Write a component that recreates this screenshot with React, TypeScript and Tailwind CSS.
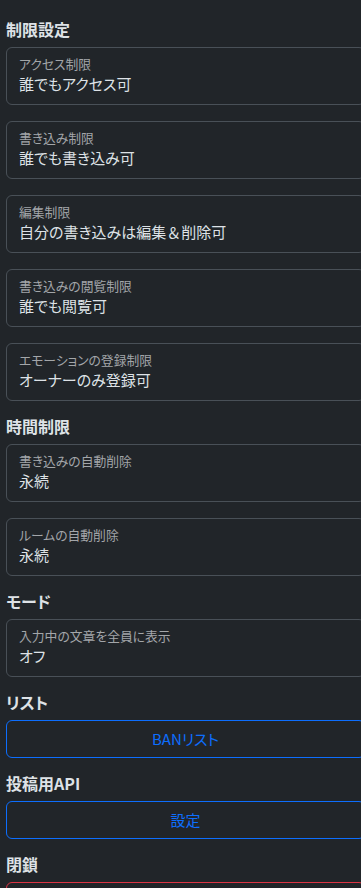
import React from "react";

const font = { fontFamily: '"Noto Sans CJK JP", "Noto Sans", sans-serif' };

function Heading({ children }: { children: React.ReactNode }) {
  return (
    <div className="mb-2 text-[16px] leading-[19px] font-bold text-[#dee2e6]">{children}</div>
  );
}

function Field({ label, value }: { label: string; value: React.ReactNode }) {
  return (
    <div className="mb-4 w-[359px] rounded-[6px] border border-[#495057] px-3 pt-[7px] pb-[8px]">
      <div className="text-[12.8px] leading-[17px] text-[#a3a6a9]">{label}</div>
      <div className="text-[15px] leading-[24px] text-[#dee2e6]">{value}</div>
    </div>
  );
}

function Btn({ children, red }: { children?: React.ReactNode; red?: boolean }) {
  return (
    <button
      className={
        red
          ? "mb-4 block h-[38px] w-[359px] rounded-[6px] border border-[#dc3545] text-center text-[15px] leading-[24px] text-[#dc3545]"
          : "mb-4 block h-[38px] w-[359px] rounded-[6px] border border-[#0d6efd] text-center text-[15px] leading-[24px] text-[#0d6efd]"
      }
    >
      {children}
    </button>
  );
}

export default function App() {
  return (
    <div
      className="h-[888px] w-full overflow-hidden bg-[#212529] [font-feature-settings:'palt']"
      style={font}
    >
      <div className="pl-[6px] pt-[20px]">
        <Heading>制限設定</Heading>
        <Field label="アクセス制限" value="誰でもアクセス可" />
        <Field label="書き込み制限" value="誰でも書き込み可" />
        <Field
          label="編集制限"
          value={
            <>
              自分の書き込みは編集
              <span className="[font-feature-settings:normal]">＆</span>
              削除可
            </>
          }
        />
        <Field label="書き込みの閲覧制限" value="誰でも閲覧可" />
        <Field label="エモーションの登録制限" value="オーナーのみ登録可" />
        <Heading>時間制限</Heading>
        <Field label="書き込みの自動削除" value="永続" />
        <Field label="ルームの自動削除" value="永続" />
        <Heading>モード</Heading>
        <Field label="入力中の文章を全員に表示" value="オフ" />
        <Heading>リスト</Heading>
        <Btn>BANリスト</Btn>
        <Heading>投稿用API</Heading>
        <Btn>設定</Btn>
        <Heading>閉鎖</Heading>
        <Btn red />
      </div>
    </div>
  );
}
